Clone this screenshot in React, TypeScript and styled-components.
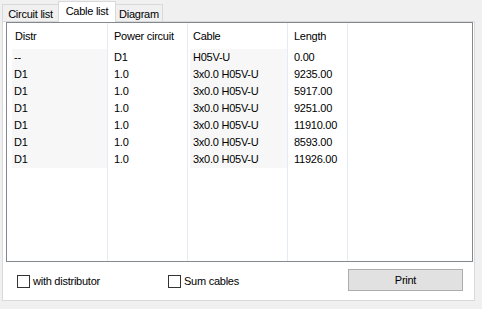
import React from 'react';
import styled, { createGlobalStyle } from 'styled-components';

const GlobalStyle = createGlobalStyle`
    html, body {
        margin: 0;
        padding: 0;
        background: #f0f0f0;
    }
    body {
        font-family: "Liberation Sans", Arial, sans-serif;
        font-size: 11px;
        letter-spacing: -0.25px;
        color: #000;
    }
`;

interface Column {
    title: string;
    width: number;
    shaded: boolean;
    headPad: number;
    inset: number;
    textPad: number;
}

const columns: Column[] = [
    { title: 'Distr', width: 101, shaded: true, headPad: 8, inset: 5, textPad: 2 },
    { title: 'Power circuit', width: 80, shaded: false, headPad: 6, inset: 0, textPad: 6 },
    { title: 'Cable', width: 100, shaded: true, headPad: 5, inset: 2, textPad: 3 },
    { title: 'Length', width: 60, shaded: false, headPad: 6, inset: 0, textPad: 6 },
];

const rows: string[][] = [
    ['--', 'D1', 'H05V-U', '0.00'],
    ['D1', '1.0', '3x0.0 H05V-U', '9235.00'],
    ['D1', '1.0', '3x0.0 H05V-U', '5917.00'],
    ['D1', '1.0', '3x0.0 H05V-U', '9251.00'],
    ['D1', '1.0', '3x0.0 H05V-U', '11910.00'],
    ['D1', '1.0', '3x0.0 H05V-U', '8593.00'],
    ['D1', '1.0', '3x0.0 H05V-U', '11926.00'],
];

const tabs = [
    { label: 'Circuit list', width: 57 },
    { label: 'Cable list', width: 58 },
    { label: 'Diagram', width: 48 },
];

const App: React.FC = () => {
    const active = 1;

    return (
        <Window>
            <GlobalStyle />
            <TabStrip>
                {tabs.map((t, i) => (
                    <Tab key={t.label} $active={i === active} $width={t.width}>
                        {t.label}
                    </Tab>
                ))}
            </TabStrip>
            <Panel>
                <ListView>
                    {columns.map((col, c) => (
                        <ListColumn key={col.title} $width={col.width}>
                            <HeaderCell $pad={col.headPad}>{col.title}</HeaderCell>
                            {rows.map((r, i) => (
                                <Cell
                                    key={i}
                                    $shaded={col.shaded}
                                    $inset={col.inset}
                                    $pad={col.textPad}
                                >
                                    {r[c]}
                                </Cell>
                            ))}
                        </ListColumn>
                    ))}
                    <Filler />
                </ListView>
                <Footer>
                    <Option $width={151}>
                        <CheckBox />
                        <span>with distributor</span>
                    </Option>
                    <Option $width={180}>
                        <CheckBox />
                        <span>Sum cables</span>
                    </Option>
                    <PrintButton>Print</PrintButton>
                </Footer>
            </Panel>
        </Window>
    );
};

const Window = styled.div`
    width: 482px;
    height: 309px;
    overflow: hidden;
`;

const TabStrip = styled.div`
    display: flex;
    align-items: flex-end;
    height: 21px;
    padding-left: 2px;
`;

const Tab = styled.div<{ $active: boolean; $width: number }>`
    box-sizing: border-box;
    width: ${p => p.$width}px;
    height: ${p => (p.$active ? 21 : 17)}px;
    margin-bottom: ${p => (p.$active ? -1 : 0)}px;
    margin-right: -1px;
    position: relative;
    z-index: ${p => (p.$active ? 2 : 1)};
    display: flex;
    justify-content: center;
    padding-top: 3px;
    line-height: 13px;
    background: ${p => (p.$active ? '#ffffff' : '#f0f0f0')};
    border: 1px solid #d9d9d9;
    border-bottom: none;
    white-space: nowrap;
`;

const Panel = styled.div`
    box-sizing: border-box;
    width: 473px;
    height: 280px;
    margin-left: 2px;
    background: #ffffff;
    border: 1px solid #d9d9d9;
    padding: 0 1px 0 3px;
    display: flex;
    flex-direction: column;
`;

const ListView = styled.div`
    box-sizing: border-box;
    height: 240px;
    border: 1px solid #828790;
    display: flex;
    align-items: stretch;
    background: #ffffff;
`;

const ListColumn = styled.div<{ $width: number }>`
    box-sizing: border-box;
    width: ${p => p.$width}px;
    border-right: 1px solid #e5ebf2;
    display: flex;
    flex-direction: column;
`;

const Filler = styled.div`
    flex: 1;
`;

const HeaderCell = styled.div<{ $pad: number }>`
    height: 26px;
    box-sizing: border-box;
    padding: 5px 0 0 ${p => p.$pad}px;
    line-height: 17px;
    white-space: nowrap;
`;

const Cell = styled.div<{ $shaded: boolean; $inset: number; $pad: number }>`
    height: 17px;
    line-height: 17px;
    margin-left: ${p => p.$inset}px;
    padding-left: ${p => p.$pad}px;
    background: ${p => (p.$shaded ? '#f7f7f7' : 'transparent')};
    white-space: nowrap;
`;

const Footer = styled.div`
    display: flex;
    align-items: center;
    padding: 7px 0 0 11px;
`;

const Option = styled.label<{ $width: number }>`
    width: ${p => p.$width}px;
    display: flex;
    align-items: center;
    gap: 3px;
    line-height: 13px;
    margin-top: 2px;
`;

const CheckBox = styled.span`
    box-sizing: border-box;
    width: 13px;
    height: 13px;
    border: 1px solid #333333;
    background: #ffffff;
    flex-shrink: 0;
`;

const PrintButton = styled.button`
    box-sizing: border-box;
    width: 115px;
    height: 22px;
    padding: 0;
    background: #e1e1e1;
    border: 1px solid #adadad;
    font-family: inherit;
    font-size: 11px;
    letter-spacing: -0.25px;
    color: #000;
`;

export default App;
